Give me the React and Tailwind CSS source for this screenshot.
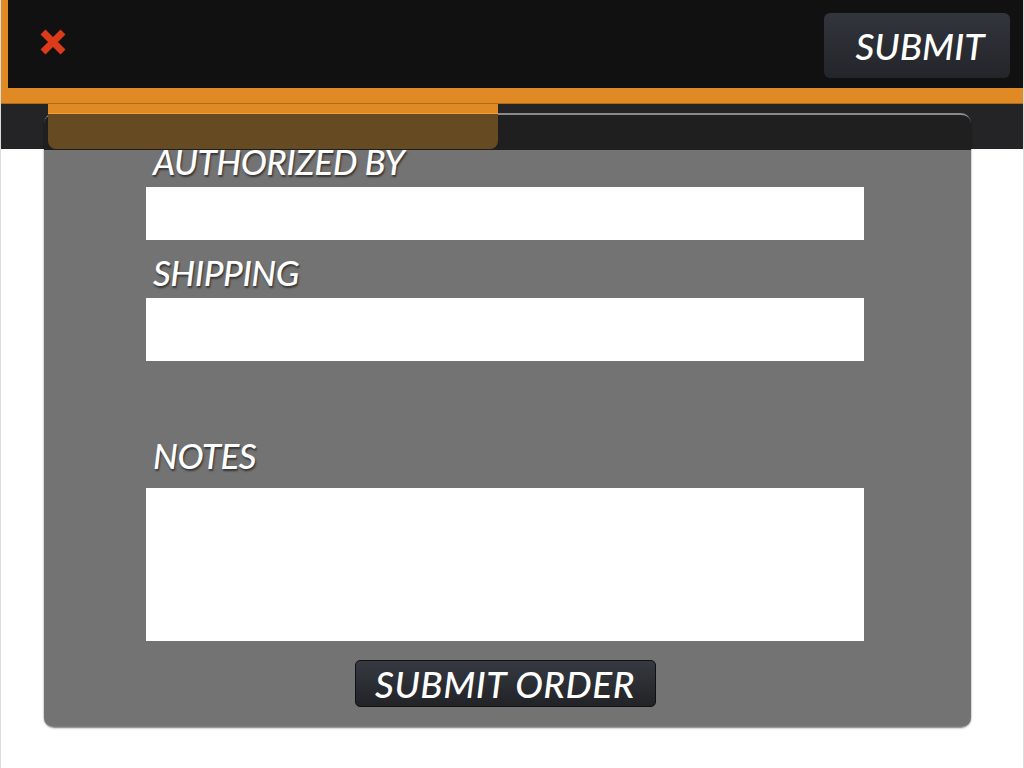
const labelCls =
  "block pl-[7px] text-[35px] leading-none italic font-medium text-white tracking-[-0.5px] [text-shadow:1px_2px_2px_rgba(0,0,0,0.55)]";

function CloseIcon() {
  return (
    <svg width="26" height="26" viewBox="0 0 26 26" className="mt-[-4px]">
      <path d="M3 3 L23 23 M23 3 L3 23" stroke="#dc3b19" strokeWidth="7" strokeLinecap="butt" />
    </svg>
  );
}

function Field({ label, height, gap }) {
  return (
    <div className="flex flex-col">
      <span className={labelCls}>{label}</span>
      <div className={`${gap} bg-white w-[718px] ${height}`} />
    </div>
  );
}

export default function App() {
  return (
    <div className="min-h-screen bg-white font-['Lato','Liberation_Sans',sans-serif] border-x border-[#dcdcdc]">
      {/* top bar */}
      <div className="h-[88px] bg-[#111112] border-l-[7px] border-[#e08a25] flex items-center justify-between pl-[32px] pr-[13px]">
        <CloseIcon />
        <button className="w-[186px] h-[65px] mt-[3px] rounded-[6px] bg-gradient-to-b from-[#32353c] to-[#23252a] text-white text-[37px] italic font-medium pl-[6px]">
          SUBMIT
        </button>
      </div>
      <div className="h-[16px] bg-[#e08a25] border-b border-[#b06a18]" />

      {/* panel area */}
      <div className="bg-[linear-gradient(to_bottom,#242426_45px,#ffffff_45px)] pb-[40px]">
        <div className="h-[9px] flex">
          <div className="ml-[47px] w-[450px] bg-[#e08a25]" />
        </div>
        <div className="ml-[43px] w-[927px] rounded-[10px] shadow-[0_2px_2px_rgba(0,0,0,0.55)]">
          <div className="h-[37px] bg-[#1f1f20] rounded-t-[10px] border-t-2 border-[#8a8a8a] flex">
            <div className="ml-[4px] mt-[-2px] w-[450px] h-[36px] bg-[#664a22] border-t border-[#f0a040] rounded-b-[8px]" />
          </div>
          <div className="bg-[#737373] rounded-b-[8px] pl-[102px] pb-[19px] flex flex-col">
            <div className="mt-[-6px]">
              <Field label="AUTHORIZED BY" height="h-[53px]" gap="mt-[8px]" />
            </div>
            <div className="mt-[15px]">
              <Field label="SHIPPING" height="h-[63px]" gap="mt-[8px]" />
            </div>
            <div className="mt-[77px]">
              <Field label="NOTES" height="h-[153px]" gap="mt-[15px]" />
            </div>
            <div className="w-[718px] flex justify-center mt-[19px]">
              <button className="w-[301px] h-[47px] rounded-[5px] border border-[#111] bg-gradient-to-b from-[#363940] to-[#212327] text-white text-[37px] italic font-medium tracking-[0.5px] leading-none">
                SUBMIT ORDER
              </button>
            </div>
          </div>
        </div>
      </div>
    </div>
  );
}
